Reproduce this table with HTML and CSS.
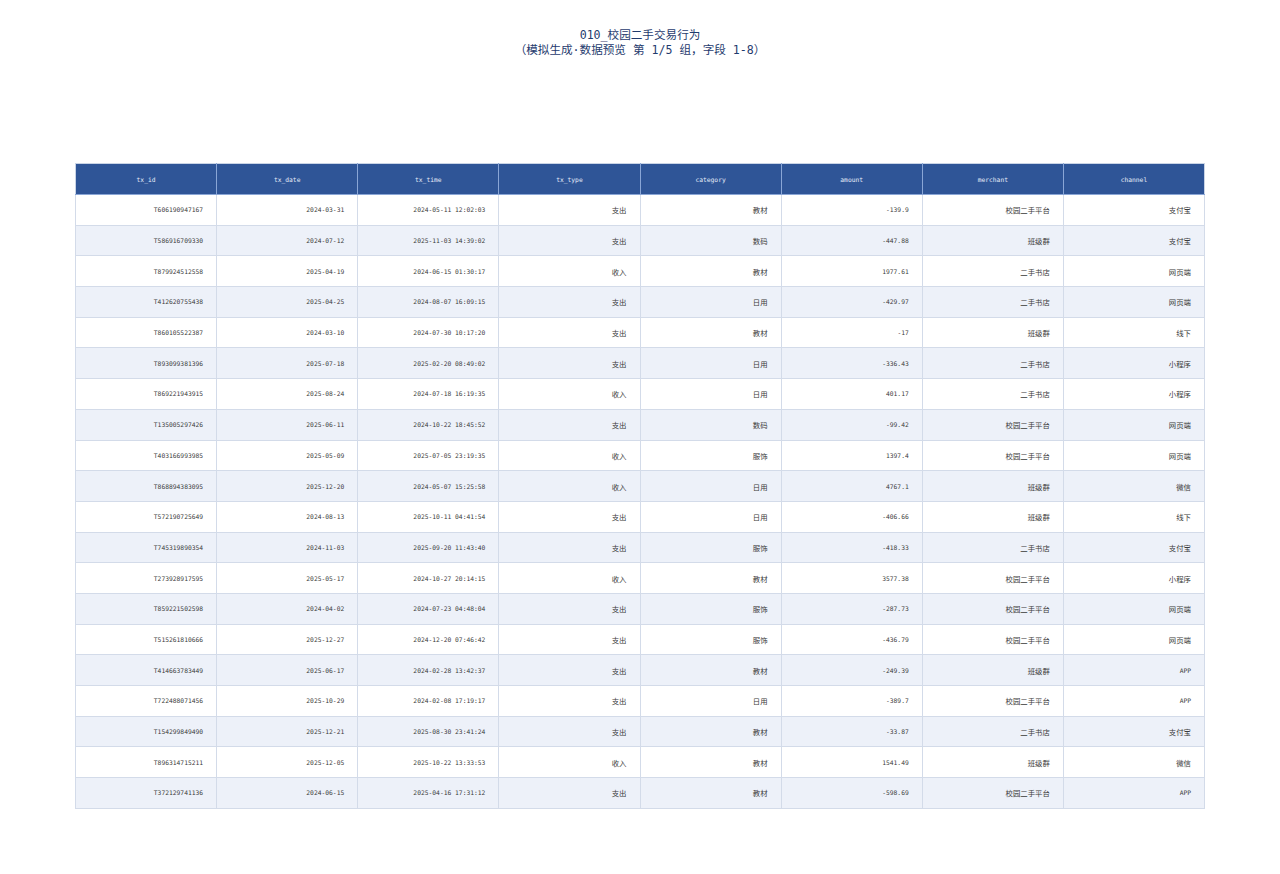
FILE: index.html
```html
<!DOCTYPE html>
<html lang="zh-CN">
<head>
<meta charset="utf-8">
<title>010_校园二手交易行为</title>
<link rel="stylesheet" href="styles.css">
</head>
<body>
<header class="title">
  <div class="title-line">010_校园二手交易行为</div>
  <div class="title-line">（模拟生成·数据预览 第 1/5 组，字段 1-8）</div>
</header>
<main class="wrap">
<table class="grid">
  <thead>
    <tr><th>tx_id</th><th>tx_date</th><th>tx_time</th><th>tx_type</th><th>category</th><th>amount</th><th>merchant</th><th>channel</th></tr>
  </thead>
  <tbody>
    <tr><td>T606190947167</td><td>2024-03-31</td><td>2024-05-11 12:02:03</td><td class="cjk">支出</td><td class="cjk">教材</td><td>-139.9</td><td class="cjk">校园二手平台</td><td class="cjk">支付宝</td></tr>
    <tr><td>T586916709330</td><td>2024-07-12</td><td>2025-11-03 14:39:02</td><td class="cjk">支出</td><td class="cjk">数码</td><td>-447.88</td><td class="cjk">班级群</td><td class="cjk">支付宝</td></tr>
    <tr><td>T879924512558</td><td>2025-04-19</td><td>2024-06-15 01:30:17</td><td class="cjk">收入</td><td class="cjk">教材</td><td>1977.61</td><td class="cjk">二手书店</td><td class="cjk">网页端</td></tr>
    <tr><td>T412620755438</td><td>2025-04-25</td><td>2024-08-07 16:09:15</td><td class="cjk">支出</td><td class="cjk">日用</td><td>-429.97</td><td class="cjk">二手书店</td><td class="cjk">网页端</td></tr>
    <tr><td>T860105522387</td><td>2024-03-10</td><td>2024-07-30 10:17:20</td><td class="cjk">支出</td><td class="cjk">教材</td><td>-17</td><td class="cjk">班级群</td><td class="cjk">线下</td></tr>
    <tr><td>T893099381396</td><td>2025-07-18</td><td>2025-02-20 08:49:02</td><td class="cjk">支出</td><td class="cjk">日用</td><td>-336.43</td><td class="cjk">二手书店</td><td class="cjk">小程序</td></tr>
    <tr><td>T869221943915</td><td>2025-08-24</td><td>2024-07-18 16:19:35</td><td class="cjk">收入</td><td class="cjk">日用</td><td>401.17</td><td class="cjk">二手书店</td><td class="cjk">小程序</td></tr>
    <tr><td>T135005297426</td><td>2025-06-11</td><td>2024-10-22 18:45:52</td><td class="cjk">支出</td><td class="cjk">数码</td><td>-99.42</td><td class="cjk">校园二手平台</td><td class="cjk">网页端</td></tr>
    <tr><td>T403166993985</td><td>2025-05-09</td><td>2025-07-05 23:19:35</td><td class="cjk">收入</td><td class="cjk">服饰</td><td>1397.4</td><td class="cjk">校园二手平台</td><td class="cjk">网页端</td></tr>
    <tr><td>T868894383095</td><td>2025-12-20</td><td>2024-05-07 15:25:58</td><td class="cjk">收入</td><td class="cjk">日用</td><td>4767.1</td><td class="cjk">班级群</td><td class="cjk">微信</td></tr>
    <tr><td>T572190725649</td><td>2024-08-13</td><td>2025-10-11 04:41:54</td><td class="cjk">支出</td><td class="cjk">日用</td><td>-406.66</td><td class="cjk">班级群</td><td class="cjk">线下</td></tr>
    <tr><td>T745319890354</td><td>2024-11-03</td><td>2025-09-20 11:43:40</td><td class="cjk">支出</td><td class="cjk">服饰</td><td>-418.33</td><td class="cjk">二手书店</td><td class="cjk">支付宝</td></tr>
    <tr><td>T273928917595</td><td>2025-05-17</td><td>2024-10-27 20:14:15</td><td class="cjk">收入</td><td class="cjk">教材</td><td>3577.38</td><td class="cjk">校园二手平台</td><td class="cjk">小程序</td></tr>
    <tr><td>T859221502598</td><td>2024-04-02</td><td>2024-07-23 04:48:04</td><td class="cjk">支出</td><td class="cjk">服饰</td><td>-287.73</td><td class="cjk">校园二手平台</td><td class="cjk">网页端</td></tr>
    <tr><td>T515261810666</td><td>2025-12-27</td><td>2024-12-20 07:46:42</td><td class="cjk">支出</td><td class="cjk">服饰</td><td>-436.79</td><td class="cjk">校园二手平台</td><td class="cjk">网页端</td></tr>
    <tr><td>T414663783449</td><td>2025-06-17</td><td>2024-02-28 13:42:37</td><td class="cjk">支出</td><td class="cjk">教材</td><td>-249.39</td><td class="cjk">班级群</td><td>APP</td></tr>
    <tr><td>T722488071456</td><td>2025-10-29</td><td>2024-02-08 17:19:17</td><td class="cjk">支出</td><td class="cjk">日用</td><td>-389.7</td><td class="cjk">校园二手平台</td><td>APP</td></tr>
    <tr><td>T154299849490</td><td>2025-12-21</td><td>2025-08-30 23:41:24</td><td class="cjk">支出</td><td class="cjk">教材</td><td>-33.87</td><td class="cjk">二手书店</td><td class="cjk">支付宝</td></tr>
    <tr><td>T896314715211</td><td>2025-12-05</td><td>2025-10-22 13:33:53</td><td class="cjk">收入</td><td class="cjk">教材</td><td>1541.49</td><td class="cjk">班级群</td><td class="cjk">微信</td></tr>
    <tr><td>T372129741136</td><td>2024-06-15</td><td>2025-04-16 17:31:12</td><td class="cjk">支出</td><td class="cjk">教材</td><td>-598.69</td><td class="cjk">校园二手平台</td><td>APP</td></tr>
  </tbody>
</table>
</main>
</body>
</html>
```

FILE: styles.css
```css
html, body {
  margin: 0;
  padding: 0;
  background: #ffffff;
}

body {
  font-family: "DejaVu Sans Mono", "Noto Sans CJK SC", monospace;
  color: #333333;
}

.title {
  padding-top: 28px;
  text-align: center;
  color: #1f3b6e;
  font-family: "DejaVu Sans Mono", "Noto Sans CJK SC", monospace;
  font-size: 11.6px;
  line-height: 15px;
}

.wrap {
  padding: 105px 75px 0 75px;
}

.grid {
  width: 1130px;
  border-collapse: collapse;
  table-layout: fixed;
  font-size: 6.3px;
}

.grid th {
  height: 30px;
  background: #2f5597;
  color: #e4ebf7;
  font-weight: normal;
  text-align: center;
  border: 1px solid #8aa6d6;
  border-top-color: #c9d4e6;
  padding: 0;
}

.grid th:first-child { border-left-color: #c9d4e6; }
.grid th:last-child { border-right-color: #c9d4e6; }

.grid tbody tr {
  height: 30.7px;
}

.grid tbody tr:nth-child(even) {
  background: #edf1f9;
}

.grid td {
  text-align: right;
  padding: 0 13px 0 4px;
  border: 1px solid #d3dbe9;
  color: #3a3a3a;
  white-space: nowrap;
}

.grid td.cjk {
  font-family: "Noto Sans CJK SC", sans-serif;
  font-size: 7.4px;
}
```
